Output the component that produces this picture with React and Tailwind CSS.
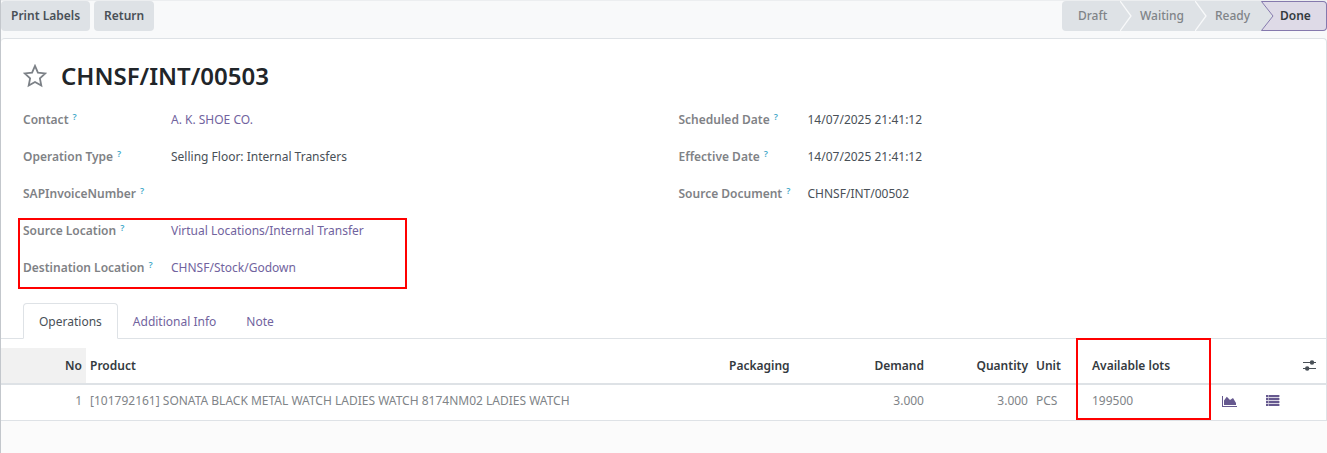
import { useState } from 'react';

const STAGES = ['Draft', 'Waiting', 'Ready'];
const TABS = ['Operations', 'Additional Info', 'Note'];

const LEFT_FIELDS = [
  { label: 'Contact', value: 'A. K. SHOE CO.', link: true },
  { label: 'Operation Type', value: 'Selling Floor: Internal Transfers' },
  { label: 'SAPInvoiceNumber', value: '' },
];

const LOCATION_FIELDS = [
  { label: 'Source Location', value: 'Virtual Locations/Internal Transfer', link: true },
  { label: 'Destination Location', value: 'CHNSF/Stock/Godown', link: true },
];

const RIGHT_FIELDS = [
  { label: 'Scheduled Date', value: '14/07/2025 21:41:12' },
  { label: 'Effective Date', value: '14/07/2025 21:41:12' },
  { label: 'Source Document', value: 'CHNSF/INT/00502' },
];

function StarIcon() {
  return (
    <svg width="24" height="24" viewBox="0 0 24 24" fill="none" stroke="#7c8187" strokeWidth="1.8">
      <path d="M12 1.9 L14.9 8.6 L22.3 9.4 L16.9 14.3 L18.3 21.5 L12 18 L5.7 21.5 L7.1 14.3 L1.7 9.4 L9.1 8.6 Z" />
    </svg>
  );
}

function AreaChartIcon() {
  return (
    <svg width="16" height="12" viewBox="0 0 16 12" fill="#66598f">
      <path d="M0 1 H1 V11 H15 V12 H0 Z" />
      <path d="M2 10 V5.5 L4.8 1.8 L8 5 L11 3 L14 8 V10 Z" />
    </svg>
  );
}

function ListIcon() {
  return (
    <svg width="14" height="12" viewBox="0 0 14 12" fill="#66598f">
      <rect x="0" y="0" width="13" height="11" opacity="0.25" />
      {[0, 3, 6, 9].map(y => (
        <g key={y}>
          <rect x="0" y={y} width="2" height="2" />
          <rect x="2.6" y={y} width="10.8" height="2" />
        </g>
      ))}
    </svg>
  );
}

function AdjustIcon() {
  return (
    <svg width="15" height="12" viewBox="0 0 15 12" fill="#495057">
      <rect x="1" y="2" width="13" height="1" />
      <circle cx="10" cy="2.5" r="2.2" />
      <rect x="1" y="8" width="13" height="1" />
      <circle cx="5.2" cy="8.5" r="2.2" />
    </svg>
  );
}

function Field({ label, value, link, narrow }) {
  return (
    <div className="flex h-[37px] items-start">
      <dt className={`shrink-0 font-semibold text-[#7f8286] ${narrow ? 'w-[129px]' : 'w-[148px]'}`}>
        {label}
        <sup className="ml-1 text-[9px] text-[#3fa9c9]">?</sup>
      </dt>
      <dd className="text-[#495057]">
        {link ? <a href="#" className="text-[#71639e]">{value}</a> : value}
      </dd>
    </div>
  );
}

function StatusBar() {
  return (
    <div className="flex h-[30px] font-medium text-[#808488]">
      {STAGES.map((stage, i) => (
        <div key={stage} className="flex">
          <button type="button" className={`bg-[#dee2e6] text-left ${i === 0 ? 'w-[58px] rounded-l pl-4' : i === 1 ? 'w-[63px] pl-2' : 'w-[54px] pl-2'}`}>
            {stage}
          </button>
          {i < 2 && (
            <svg width="12" height="30" viewBox="0 0 12 30" fill="none">
              <rect width="12" height="30" fill="#dee2e6" />
              <path d="M0 0 L11 15 L0 30" stroke="#f8f9fa" strokeWidth="1.3" />
            </svg>
          )}
        </div>
      ))}
      <svg width="13" height="30" viewBox="0 0 13 30" fill="none">
        <path d="M0 0 L12 15 L0 30 Z" fill="#dee2e6" />
        <path d="M0 0 H13 V30 H0 L12 15 Z" fill="#dedae7" />
        <path d="M13 .5 H.5 L12 15 L.5 29.5 H13" stroke="#8579ad" />
      </svg>
      <button type="button" className="w-[53px] rounded-r border border-l-0 border-[#8579ad] bg-[#dedae7] pl-[6px] text-left font-semibold text-[#343a40]">
        Done
      </button>
    </div>
  );
}

function MovesTable() {
  return (
    <table className="mt-[9px] w-full table-fixed border-collapse text-left">
      <colgroup>
        <col className="w-[85px]" />
        <col />
        <col className="w-[100px]" />
        <col className="w-[103px]" />
        <col className="w-[104px]" />
        <col className="w-[56px]" />
        <col className="w-[130px]" />
        <col className="w-[44px]" />
        <col className="w-[36px]" />
        <col className="w-[28px]" />
      </colgroup>
      <thead className="text-[#343a40]">
        <tr className="h-[36px] border-b-2 border-[#dee2e6] *:px-1 *:font-semibold">
          <th className="bg-[#f1f1f1] text-right">No</th>
          <th>Product</th>
          <th>Packaging</th>
          <th className="text-right">Demand</th>
          <th className="text-right">Quantity</th>
          <th>Unit</th>
          <th>Available lots</th>
          <th />
          <th />
          <th>
            <button type="button" aria-label="Optional columns" className="block"><AdjustIcon /></button>
          </th>
        </tr>
      </thead>
      <tbody className="text-[#808488]">
        <tr className="h-[36px] border-b border-[#dee2e6] *:px-1 *:pb-[2px]">
          <td className="text-right">1</td>
          <td className="whitespace-nowrap">[101792161] SONATA BLACK METAL WATCH LADIES WATCH 8174NM02 LADIES WATCH</td>
          <td />
          <td className="text-right">3.000</td>
          <td className="text-right">3.000</td>
          <td>PCS</td>
          <td>199500</td>
          <td><button type="button" aria-label="Forecast report" className="block"><AreaChartIcon /></button></td>
          <td><button type="button" aria-label="Details" className="block"><ListIcon /></button></td>
          <td />
        </tr>
      </tbody>
    </table>
  );
}

export default function App() {
  const [tab, setTab] = useState('Operations');

  return (
    <div className="min-h-screen border-l border-[#c3c7cc] bg-[#f8f9fa] font-['Noto_Sans',sans-serif] text-[12px] leading-4">
      <header className="flex h-[38px] items-start justify-between border-t border-[#eceef0] text-[#495057]">
        <div className="flex gap-1 font-semibold">
          <button type="button" className="h-[30px] rounded bg-[#dee2e6] px-[10px]">Print Labels</button>
          <button type="button" className="h-[30px] rounded bg-[#dee2e6] px-[10px]">Return</button>
        </div>
        <StatusBar />
      </header>

      <main className="relative rounded-t border-t border-r border-[#dee2e6] bg-white">
        <div className="flex items-center gap-[14px] px-[22px] pt-[21px]">
          <button type="button" aria-label="Mark as favorite"><StarIcon /></button>
          <h1 className="text-[24px] leading-8 font-semibold text-[#212529]">CHNSF/INT/00503</h1>
        </div>

        <div className="grid grid-cols-2 gap-[30px] px-[22px] pt-5">
          <dl>
            {LEFT_FIELDS.map(f => <Field key={f.label} {...f} />)}
            <div className="relative">
              {/* highlight around the two locations */}
              <div className="pointer-events-none absolute -top-[5px] -left-[5px] h-[71px] w-[389px] border-2 border-[#ff0000]" />
              {LOCATION_FIELDS.map(f => <Field key={f.label} {...f} />)}
            </div>
          </dl>
          <dl>
            {RIGHT_FIELDS.map(f => <Field key={f.label} {...f} narrow />)}
          </dl>
        </div>

        <div className="flex h-[42px] items-end border-b border-[#dee2e6] px-[22px]">
          {TABS.map(t => (
            <button
              key={t}
              type="button"
              onClick={() => setTab(t)}
              className={`-mb-px h-[36px] rounded-t border px-[14px] pt-px first:px-[15px] ${
                t === tab ? 'border-[#dee2e6] border-b-white bg-white text-[#495057]' : 'border-transparent text-[#71639e]'
              }`}
            >
              {t}
            </button>
          ))}
        </div>

        <MovesTable />
        {/* highlight around the lots column */}
        <div className="pointer-events-none absolute right-[115px] bottom-px h-[82px] w-[135px] border-2 border-[#ff0000]" />
      </main>
      <div className="h-8 bg-[#fbfbfb]" />
    </div>
  );
}
